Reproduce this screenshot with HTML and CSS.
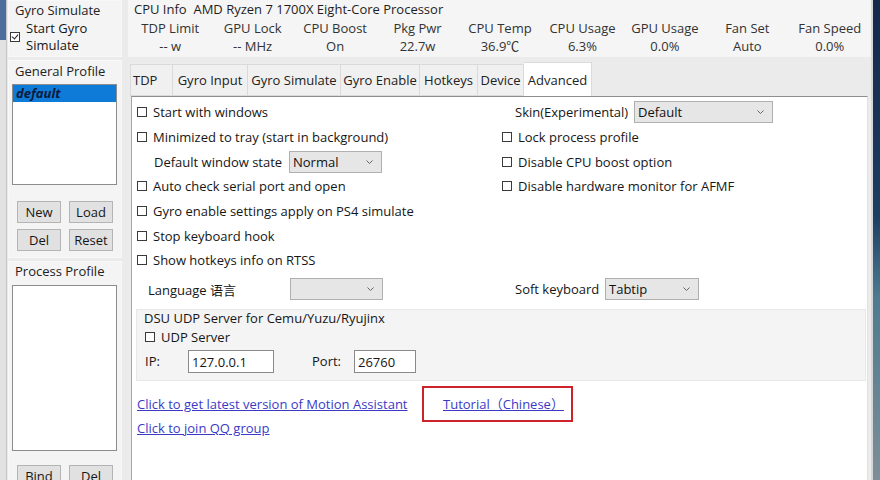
FILE: index.html
```html
<!DOCTYPE html>
<html lang="en">
<head>
	<meta charset="utf-8">
	<title>Motion Assistant</title>
	<link rel="stylesheet" href="styles.css">
</head>
<body>

<div id="screen">
	<div class="behind"></div>

	<div id="window">
		<!-- 左侧：陀螺仪模拟 + 配置文件 -->
		<div class="side">
			<div class="group gyro">
				<div class="caption">Gyro Simulate</div>
				<div class="check on"><span class="box"></span><span>Start Gyro<br>Simulate</span></div>
			</div>
			<div class="group general">
				<div class="caption">General Profile</div>
				<div class="list short"><div class="item sel">default</div></div>
				<div class="btns">
					<span class="btn">New</span><span class="btn">Load</span>
					<span class="btn">Del</span><span class="btn">Reset</span>
				</div>
			</div>
			<div class="group process">
				<div class="caption">Process Profile</div>
				<div class="list tall"></div>
				<div class="btns">
					<span class="btn">Bind</span><span class="btn">Del</span>
				</div>
			</div>
		</div>

		<div class="main">
			<div class="info">
				<div class="cpu">CPU Info&nbsp; AMD Ryzen 7 1700X Eight-Core Processor</div>
				<div class="stats">
					<div><span>TDP Limit</span><span>-- w</span></div>
					<div><span>GPU Lock</span><span>-- MHz</span></div>
					<div><span>CPU Boost</span><span>On</span></div>
					<div><span>Pkg Pwr</span><span>22.7w</span></div>
					<div><span>CPU Temp</span><span>36.9℃</span></div>
					<div><span>CPU Usage</span><span>6.3%</span></div>
					<div><span>GPU Usage</span><span>0.0%</span></div>
					<div><span>Fan Set</span><span>Auto</span></div>
					<div><span>Fan Speed</span><span>0.0%</span></div>
				</div>
			</div>

			<div class="tabs">
				<span class="tab t-tdp">TDP</span>
				<span class="tab t-input">Gyro Input</span>
				<span class="tab t-sim">Gyro Simulate</span>
				<span class="tab t-enable">Gyro Enable</span>
				<span class="tab t-hot">Hotkeys</span>
				<span class="tab t-dev">Device</span>
				<span class="tab t-adv active">Advanced</span>
			</div>

			<div class="panel">
				<div class="grid">
					<div class="check"><span class="box"></span>Start with windows</div>
					<div class="field skin"><span class="lbl">Skin(Experimental)</span><span class="select">Default</span></div>

					<div class="check"><span class="box"></span>Minimized to tray (start in background)</div>
					<div class="check right"><span class="box"></span>Lock process profile</div>

					<div class="field state"><span class="lbl">Default window state</span><span class="select">Normal</span></div>
					<div class="check right"><span class="box"></span>Disable CPU boost option</div>

					<div class="check"><span class="box"></span>Auto check serial port and open</div>
					<div class="check right"><span class="box"></span>Disable hardware monitor for AFMF</div>

					<div class="check"><span class="box"></span>Gyro enable settings apply on PS4 simulate</div>
					<div></div>

					<div class="check"><span class="box"></span>Stop keyboard hook</div>
					<div></div>

					<div class="check"><span class="box"></span>Show hotkeys info on RTSS</div>
					<div></div>

					<div class="field lang"><span class="lbl">Language 语言</span><span class="select"></span></div>
					<div class="field keyboard"><span class="lbl">Soft keyboard</span><span class="select">Tabtip</span></div>
				</div>

				<div class="dsu">
					<div class="dsu-title">DSU UDP Server for Cemu/Yuzu/Ryujinx</div>
					<div class="check"><span class="box"></span>UDP Server</div>
					<div class="addr">
						<span class="ip-lbl">IP:</span><span class="text ip">127.0.0.1</span>
						<span class="port-lbl">Port:</span><span class="text port">26760</span>
					</div>
				</div>

				<div class="links">
					<div class="row">
						<span class="link-cell"><a href="#">Click to get latest version of Motion Assistant</a></span>
						<span class="mark"><a href="#">Tutorial（Chinese）</a></span>
					</div>
					<div class="row qq"><a href="#">Click to join QQ group</a></div>
				</div>
			</div>
		</div>
	</div>

	<div class="desktop"></div>
</div>

</body>
</html>
```

FILE: styles.css
```css
body {
	margin: 0;
	font: 13px "Open Sans", "Noto Sans CJK SC", sans-serif;
	color: #161616;
}
#screen {
	display: flex;
	width: 880px;
	height: 480px;
	overflow: hidden;
}
.behind {
	width: 6px;
	border-right: 1px solid #c4c4c4;
	background: linear-gradient(#4d6e9c 0, #4d6e9c 40px, #e2e2e2 40px);
}
.desktop {
	flex: 1;
	border-left: 2px solid #d6d6d6;
	background: linear-gradient(#14284a 0%, #1d3d62 45%, #4e7b90 62%, #7d8e98 100%);
}
#window {
	display: flex;
	width: 864px;
	background: #ebebeb;
}

/* 左侧 */
.side {
	width: 117px;
	flex-shrink: 0;
	padding-left: 1px;
	display: flex;
	flex-direction: column;
	gap: 3px;
	overflow: hidden;
}
.group {
	width: 114px;
	flex-shrink: 0;
	background: #f4f4f4;
	box-sizing: border-box;
	border: 1px solid #f8f8f8;
}
.caption {
	padding-left: 6px;
	line-height: 18px;
	color: #222;
}
.gyro {
	height: 57px;
}
.gyro .check {
	padding-left: 1px;
	margin-top: 1px;
	line-height: 17px;
}
.gyro .box {
	margin-right: 6px;
}
.general {
	height: 198px;
	padding-top: 1px;
}
.process {
	height: 240px;
}
.list {
	margin: 4px 0 0 3px;
	width: 105px;
	box-sizing: border-box;
	border: 1px solid #8c8c8c;
	background: #fff;
}
.short {
	height: 101px;
}
.tall {
	height: 166px;
	margin-top: 5px;
}
.item {
	line-height: 17px;
	padding-left: 3px;
}
.sel {
	background: #0f7bd9;
	color: #0c1a3a;
	font-weight: bold;
	font-style: italic;
}
.btns {
	display: grid;
	grid-template-columns: 44px 44px;
	gap: 6px 8px;
	padding-left: 8px;
	margin-top: 16px;
}
.process .btns {
	margin-top: 14px;
}
.btn {
	height: 22px;
	line-height: 20px;
	box-sizing: border-box;
	text-align: center;
	background: #e1e1e1;
	border: 1px solid #b4b4b4;
}

/* 复选框 */
.check {
	display: flex;
	align-items: center;
}
.box {
	width: 10px;
	height: 10px;
	box-sizing: border-box;
	border: 1px solid #3a3a3a;
	background: #fff;
	margin-right: 6px;
	flex-shrink: 0;
	position: relative;
}
.on .box::after {
	content: "";
	position: absolute;
	left: 2px;
	top: 0px;
	width: 3px;
	height: 5px;
	border: solid #222;
	border-width: 0 1px 1px 0;
	transform: rotate(40deg);
}

/* 右侧主体 */
.main {
	flex: 1;
	display: flex;
	flex-direction: column;
}
.info {
	height: 57px;
	flex-shrink: 0;
	background: #f5f5f5;
	margin: 0 1px 0 3px;
}
.cpu {
	padding-left: 6px;
	line-height: 18px;
	color: #1e1e1e;
}
.stats {
	display: grid;
	grid-template-columns: repeat(9, 1fr);
	width: 742px;
	margin-left: 1px;
	margin-top: 1px;
	color: #333;
	line-height: 18px;
}
.stats div {
	display: flex;
	flex-direction: column;
	align-items: center;
}
.tabs {
	display: flex;
	flex-shrink: 0;
	margin-top: 7px;
	padding-left: 5px;
	height: 32px;
}
.tab {
	line-height: 31px;
	height: 32px;
	box-sizing: border-box;
	border: 1px solid #dadada;
	border-left: 0;
	background: #f0f0f0;
	color: #222;
	text-align: center;
	white-space: nowrap;
}
.t-tdp {
	width: 43px;
	border-left: 1px solid #dadada;
	text-align: left;
	padding-left: 2px;
}
.t-input {
	width: 75px;
}
.t-sim {
	width: 93px;
}
.t-enable {
	width: 79px;
}
.t-hot {
	width: 58px;
}
.t-dev {
	width: 46px;
}
.t-adv {
	width: 68px;
}
.active {
	background: #fff;
	height: 34px;
	margin-top: -2px;
	line-height: 35px;
	border-bottom: 0;
	position: relative;
	z-index: 1;
}
.panel {
	flex: 1;
	margin-left: 6px;
	width: 737px;
	box-sizing: border-box;
	border-left: 1px solid #a6a6a6;
	border-top: 1px solid #8e8e8e;
	border-right: 1px solid #e2e2e2;
	background: #fff;
	padding: 3px 0 0 5px;
}
.grid {
	display: grid;
	grid-template-columns: 365px 1fr;
	grid-template-rows: repeat(7, 24.7px) 33px;
}
.field {
	display: flex;
	align-items: center;
}
.select {
	height: 22px;
	line-height: 21px;
	box-sizing: border-box;
	border: 1px solid #b0b0b0;
	background: #e6e6e6 url("data:image/svg+xml,%3Csvg xmlns='http://www.w3.org/2000/svg' width='7' height='4'%3E%3Cpolyline points='0.5,0.5 3.5,3.5 6.5,0.5' fill='none' stroke='%23666' stroke-width='1'/%3E%3C/svg%3E") no-repeat right 8px center;
	padding-left: 3px;
	color: #111;
}
.state {
	padding-left: 17px;
}
.state .lbl {
	width: 135px;
}
.state .select {
	width: 93px;
}
.lang {
	padding-left: 11px;
}
.lang .lbl {
	width: 142px;
}
.lang .select {
	width: 93px;
}
.skin {
	padding-left: 13px;
}
.skin .lbl {
	width: 119px;
}
.skin .select {
	width: 139px;
}
.keyboard {
	padding-left: 13px;
}
.keyboard .lbl {
	width: 90px;
}
.keyboard .select {
	width: 94px;
}

/* DSU 分组 */
.dsu {
	margin: 3px 0 0 -1px;
	width: 730px;
	height: 72px;
	box-sizing: border-box;
	border: 1px solid #e8e8e8;
	background: #f4f4f4;
	padding-left: 7px;
}
.dsu-title {
	line-height: 17px;
}
.dsu .check {
	height: 21px;
	padding-left: 1px;
}
.addr {
	display: flex;
	align-items: center;
	height: 27px;
	padding-left: 1px;
}
.ip-lbl {
	width: 43px;
}
.port-lbl {
	width: 42px;
	margin-left: 38px;
}
.text {
	height: 23px;
	line-height: 22px;
	box-sizing: border-box;
	border: 1px solid #8a8a8a;
	background: #fff;
	padding-left: 3px;
}
.ip {
	width: 86px;
}
.port {
	width: 62px;
}

/* 链接 */
.links a {
	color: #3a3ac6;
}
.links .row {
	display: flex;
	align-items: center;
}
.links .row:first-child {
	margin-top: 5px;
	height: 36px;
}
.link-cell {
	width: 285px;
}
.mark {
	width: 151px;
	height: 36px;
	box-sizing: border-box;
	border: 2px solid #cc2229;
	padding-left: 19px;
	line-height: 32px;
}
.qq {
	margin-top: -3px;
	line-height: 18px;
}
```
